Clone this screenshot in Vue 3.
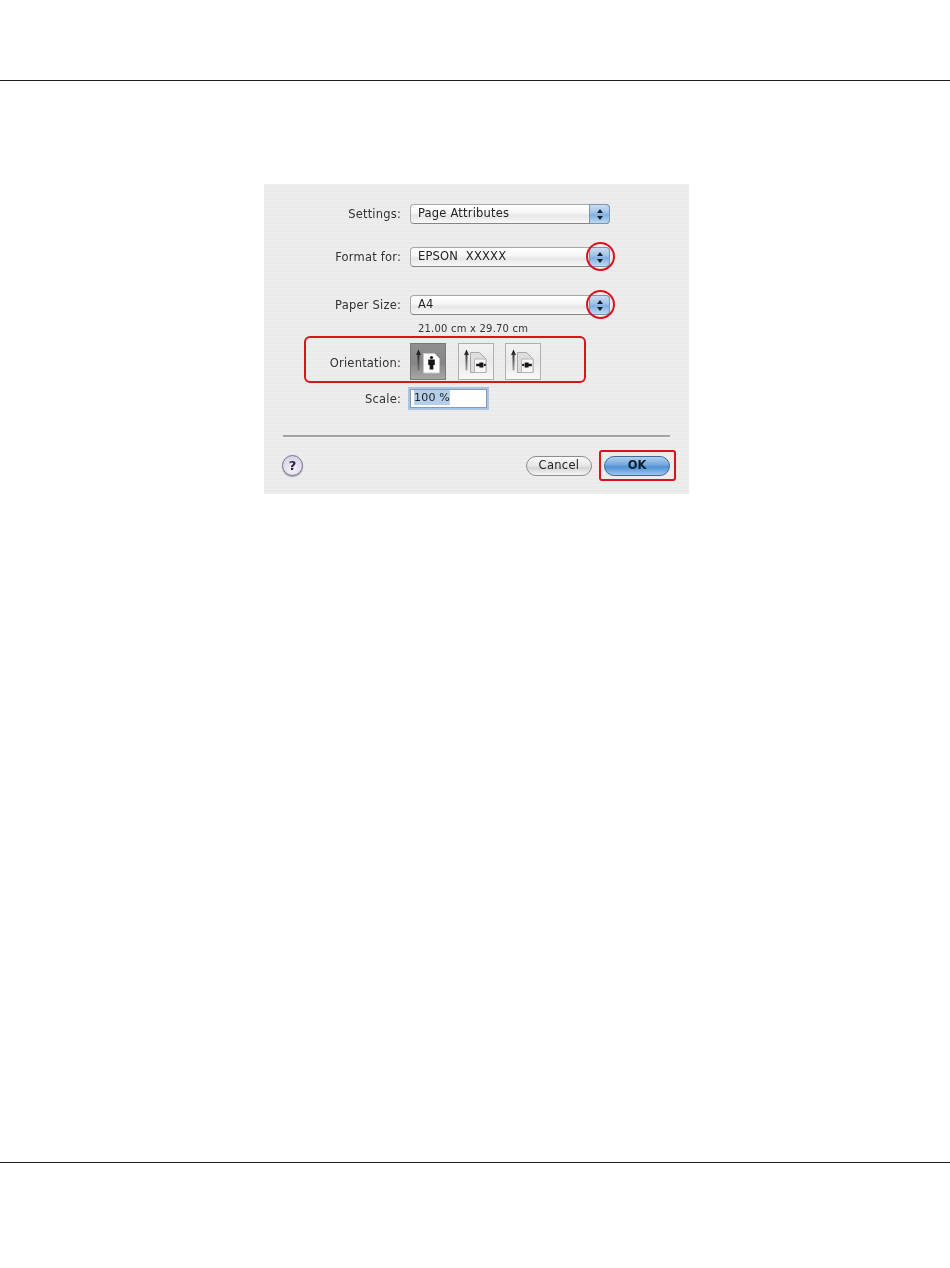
<template>
  <div class="page">
    <div class="rule"></div>

    <div class="dialog">
      <div class="form">
        <label class="k k-settings">Settings:</label>
        <div class="select s-settings">
          <span>Page Attributes</span>
          <span class="stepper"><i class="up"></i><i class="down"></i></span>
        </div>

        <label class="k k-format">Format for:</label>
        <div class="select s-format">
          <span>EPSON&nbsp; XXXXX</span>
          <span class="stepper"><i class="up"></i><i class="down"></i></span>
          <span class="ring"></span>
        </div>

        <label class="k k-paper">Paper Size:</label>
        <div class="select s-paper">
          <span>A4</span>
          <span class="stepper"><i class="up"></i><i class="down"></i></span>
          <span class="ring"></span>
        </div>

        <div class="paper-hint">21.00 cm x 29.70 cm</div>

        <label class="k k-orient">Orientation:</label>
        <div class="orient">
          <button
            v-for="o in orientations"
            :key="o.name"
            class="orient-btn"
            :class="{ active: o.active }"
          >
            <svg width="34" height="35" viewBox="0 0 34 35">
              <defs>
                <linearGradient :id="`fade-${o.name}`" x1="0" y1="0" x2="0" y2="1">
                  <stop offset="0" stop-color="#111" />
                  <stop offset="1" :stop-color="o.active ? '#777' : '#aaa'" />
                </linearGradient>
              </defs>
              <path d="M7.500 5.500 10 11H8.500v15.500h-2V11H5z" :fill="`url(#fade-${o.name})`" />
              <template v-if="o.active">
                <path d="M12.500 9.500h11l5 5v14.500h-16z" fill="#fff" stroke="#c8c8c8" />
                <g fill="#161616">
                  <circle cx="20.500" cy="13.500" r="1.600" />
                  <path d="M17.200 15.500h6.600v5.500h-1.400v4.500h-3.800V21h-1.400z" />
                </g>
              </template>
              <template v-else>
                <path d="M11.500 8.500h9l6.500 6.500v13.500H11.500z" fill="#dedede" stroke="#a8a8a8" />
                <path d="M15.500 15h11.500v13.500H15.500z" fill="#f7f7f7" stroke="#b4b4b4" />
                <g :transform="`rotate(${o.rotate} 21.500 21) translate(21.500 21) scale(.72) translate(-20.500 -19.500)`" fill="#161616">
                  <circle cx="20.500" cy="13.500" r="1.600" />
                  <path d="M17.200 15.500h6.600v5.500h-1.400v4.500h-3.800V21h-1.400z" />
                </g>
              </template>
            </svg>
          </button>
          <span class="orient-box"></span>
        </div>

        <label class="k k-scale">Scale:</label>
        <div class="scale"><span class="selected">100 %</span></div>
      </div>

      <div class="separator"></div>

      <div class="footer">
        <button class="help">?</button>
        <div class="actions">
          <button class="btn">Cancel</button>
          <button class="btn primary">OK<span class="ok-box"></span></button>
        </div>
      </div>
    </div>

    <div class="rule bottom"></div>
  </div>
</template>

<script setup>
const orientations = [
  { name: 'portrait', rotate: 0, active: true },
  { name: 'landscape-left', rotate: 90, active: false },
  { name: 'landscape-right', rotate: -90, active: false }
]
</script>

<style>
html, body { background: #fff; }
</style>

<style scoped>
.page { width: 950px; height: 1268px; padding-top: 80px; box-sizing: border-box; background: #fff; overflow: hidden; }
.rule { height: 1px; background: #1c1c1c; }
.rule.bottom { margin-top: 668px; }

.dialog {
  width: 425px; height: 310px; margin: 103px 0 0 264px; box-sizing: border-box;
  background: repeating-linear-gradient(#ededed 0 2px, #eaeaea 2px 4px);
  font-family: "DejaVu Sans", sans-serif; font-size: 11.5px; color: #222;
  filter: blur(0.4px);
  padding-top: 20px;
}
.form {
  display: grid;
  grid-template-columns: 137px 1fr;
  column-gap: 9px;
  height: 231px;
  grid-template-rows: 20px 23px 20px 28px 20px 5px 16px 7px 37px 7px 23px;
  align-items: center;
}
.k { justify-self: end; letter-spacing: 0.2px; color: #333; white-space: nowrap; }
.k-settings { grid-row: 1; grid-column: 1; }
.s-settings { grid-row: 1; grid-column: 2; }
.k-format { grid-row: 3; grid-column: 1; }
.s-format { grid-row: 3; grid-column: 2; }
.k-paper { grid-row: 5; grid-column: 1; }
.s-paper { grid-row: 5; grid-column: 2; }
.paper-hint { grid-row: 7; grid-column: 2; padding-left: 8px; font-size: 10px; letter-spacing: 0.2px; color: #333; }
.k-orient { grid-row: 9; grid-column: 1; padding-top: 3px; }
.orient { grid-row: 9; grid-column: 2; }
.k-scale { grid-row: 11; grid-column: 1; }
.scale { grid-row: 11; grid-column: 2; }

.select {
  position: relative; width: 200px; height: 20px; box-sizing: border-box;
  display: flex; align-items: center; padding: 0 0 2px 7px;
  border: 1px solid #a8a8a8; border-bottom-color: #858585; border-radius: 4px;
  background: linear-gradient(#fff 0, #f8f8f8 40%, #e6e6e6 60%, #f8f8f8 100%);
  letter-spacing: 0.2px; color: #222;
}
.stepper {
  position: absolute; right: -1px; top: -1px; width: 21px; height: 20px; box-sizing: border-box;
  border: 1px solid #7f93ab; border-radius: 0 4px 4px 0;
  background: linear-gradient(#c9def2 0, #9cc1e6 45%, #7daee0 55%, #bddbf5 100%);
  display: flex; flex-direction: column; align-items: center; justify-content: center; gap: 3px;
}
.stepper i { display: block; width: 0; height: 0; border-left: 3.500px solid transparent; border-right: 3.500px solid transparent; }
.stepper .up { border-bottom: 4px solid #16202c; }
.stepper .down { border-top: 4px solid #16202c; }
.ring {
  position: absolute; right: -6px; top: -6px; width: 29px; height: 29px; box-sizing: border-box;
  border: 2.500px solid #d8141e; border-radius: 50%;
}

.orient { position: relative; display: flex; gap: 11.500px; height: 37px; width: 132px; }
.orient-btn {
  width: 36px; height: 37px; padding: 0; box-sizing: border-box; display: flex; align-items: center; justify-content: center;
  border: 1px solid #b0b0b0; background: linear-gradient(#f2f2f2, #e9e9e9 50%, #f8f8f8);
}
.orient-btn.active { border-color: #7a7a7a; background: linear-gradient(#8f8f8f, #868686 55%, #a8a8a8); }
.orient-box {
  position: absolute; left: -106px; top: -7px; width: 282px; height: 47px; box-sizing: border-box;
  border: 2px solid #d8141e; border-radius: 6px;
}

.scale {
  width: 77px; height: 19px; box-sizing: border-box; padding: 0 3px; line-height: 16px;
  background: #fff; border: 1px solid #8a9bb0; font-size: 11px;
  box-shadow: 0 0 0 2px #a9c5e4; letter-spacing: 0.2px; color: #222;
}
.selected { background: #b4cfec; padding: 1px 0; }

.separator { height: 2px; margin: 0 19px; background: #a3a3a3; border-bottom: 1px solid #f4f4f4; }

.footer { display: flex; justify-content: space-between; align-items: center; padding: 17px 19px 0 18px; }
.help {
  width: 21px; height: 21px; padding: 0; border-radius: 50%; border: 1px solid #77728a;
  background: radial-gradient(circle at 50% 70%, #f5f2fb, #cfc8e2);
  font: bold 13px "DejaVu Sans", sans-serif; color: #2b2340;
  box-shadow: 0 1px 1px #999;
}
.actions { display: flex; gap: 12px; }
.btn {
  position: relative; width: 66px; height: 20px; padding: 0 0 1px; border-radius: 10px;
  border: 1px solid #8d8d8d; background: linear-gradient(#fafafa, #e6e6e6 50%, #d4d4d4 60%, #f7f7f7);
  font: 11.500px "DejaVu Sans", sans-serif; letter-spacing: 0.3px; color: #222;
}
.btn.primary {
  border-color: #3f6a96; background: linear-gradient(#b3d0ee, #6fa6de 45%, #4f8fd2 55%, #9cc8ef);
  font-weight: bold; letter-spacing: 0; color: #10202f;
}
.ok-box {
  position: absolute; left: -6px; top: -7px; width: 77px; height: 31px; box-sizing: border-box;
  border: 2px solid #d8141e; border-radius: 3px;
}
</style>
